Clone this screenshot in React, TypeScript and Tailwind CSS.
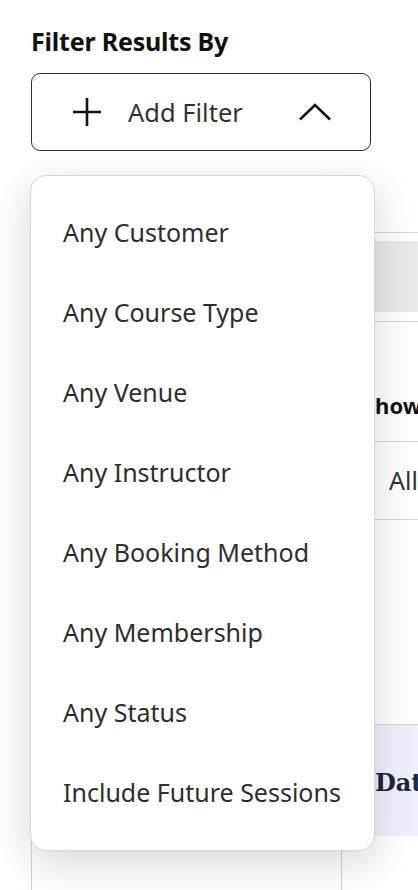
import React from "react";

const items = [
  "Any Customer",
  "Any Course Type",
  "Any Venue",
  "Any Instructor",
  "Any Booking Method",
  "Any Membership",
  "Any Status",
  "Include Future Sessions",
];

export default function App() {
  return (
    <div
      className="relative w-[418px] h-[890px] overflow-hidden bg-white"
      style={{ fontFamily: '"Noto Sans", "Open Sans", sans-serif' }}
    >
      {/* page content (behind the menu) */}
      <div className="pl-[31px] pt-[26px]">
        <h2 className="text-[25px] leading-[30px] font-bold text-[#111111] tracking-[-0.2px]">Filter Results By</h2>
        <button className="mt-[17px] w-[340px] h-[78px] rounded-[9px] border border-[#2b303c] bg-white flex items-center justify-between pl-[40px] pr-[39px]">
          <span className="flex items-center gap-[26px]">
            <svg width="30" height="30" viewBox="0 0 30 30" fill="none" stroke="#111" strokeWidth="2.6" strokeLinecap="butt">
              <path d="M15 1v28M1 15h28" />
            </svg>
            <span className="text-[25.5px] text-[#333333]">Add Filter</span>
          </span>
          <svg width="32" height="18" viewBox="0 0 32 18" fill="none" stroke="#111" strokeWidth="2.6" strokeLinejoin="miter">
            <path d="M1 16.5L16 2l15 14.5" />
          </svg>
        </button>

        <div className="w-[700px] mt-[81px]">
          <div className="border-t border-b border-[#d4d4d8] pt-[8px] pb-[9px]">
            <div className="h-[71px] bg-[#e8e8ec]" />
          </div>
          <div className="grid grid-cols-[311px_1fr]">
            <div />
            <div>
              <div className="h-[119px] flex items-end pb-[19px] pl-[21px]">
                <span className="text-[22px] font-bold text-[#111]">Show</span>
              </div>
              <div className="border-t border-b border-[#d4d4d8] h-[79px] flex items-center pl-[47px]">
                <span className="text-[25px] text-[#333]">All</span>
              </div>
            </div>
          </div>
          <div className="h-[204px]" />
          <div className="border-t border-[#d4d4d8] border-l bg-[#eef1fa] h-[112px] grid grid-cols-[311px_1fr]">
            <div />
            <div className="flex items-center pl-[32px] pt-[4px]">
              <span
                className="text-[24px] font-bold text-[#1e2638]"
                style={{ fontFamily: '"DejaVu Serif", serif' }}
              >
                Date
              </span>
            </div>
          </div>
          <div className="h-[100px] border-l border-[#d4d4d8] grid grid-cols-[310px_1fr]">
            <div className="border-r border-[#d4d4d8]" />
            <div />
          </div>
        </div>
      </div>

      {/* dropdown menu */}
      <div className="absolute left-[30px] top-[175px] w-[345px] rounded-[16px] border border-[#d6d6da] bg-white py-[17px] shadow-[0_12px_40px_rgba(0,0,0,0.16)]">
        {items.map((t) => (
          <div key={t} className="h-[80px] flex items-center pl-[32px] text-[25px] text-[#2e2e2e]">
            {t}
          </div>
        ))}
      </div>
    </div>
  );
}
